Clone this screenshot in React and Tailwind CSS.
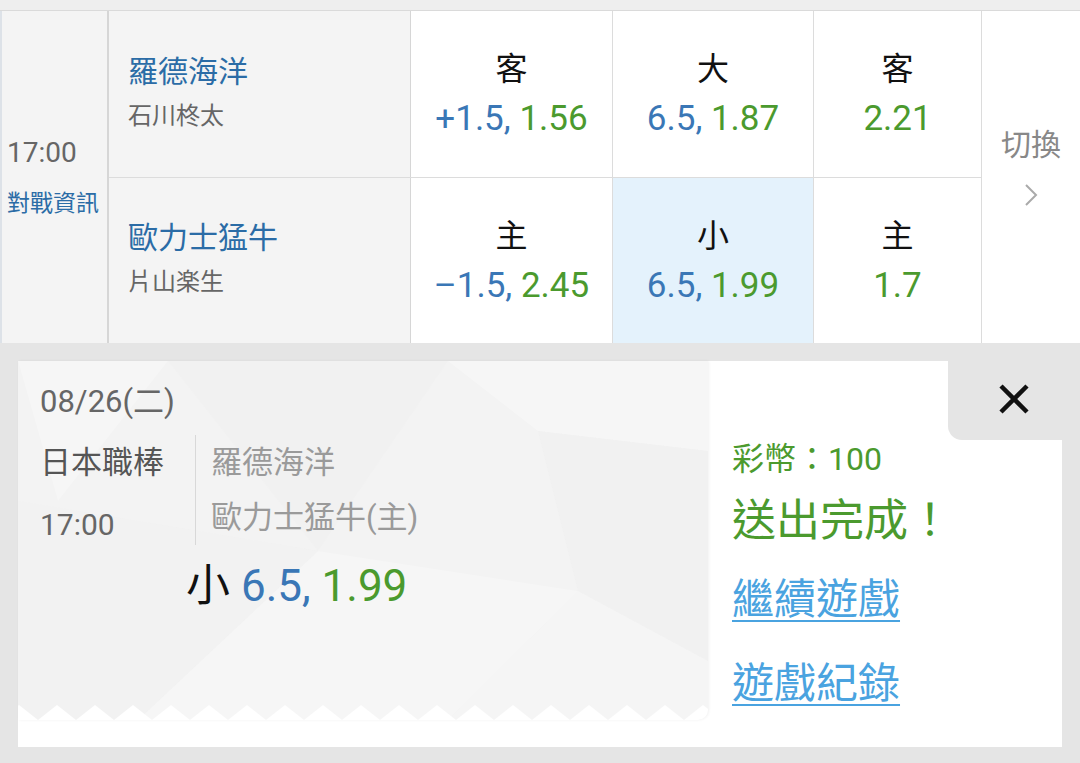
const BLUE = 'text-[#3a77b6]';
const GREEN = 'text-[#4b9a2e]';

function OddsCell({ label, line, price, highlight }) {
  return (
    <div
      className={`flex flex-col items-center justify-center border-r border-[#dcdcdc] ${
        highlight ? 'bg-[#e4f2fc]' : 'bg-white'
      }`}
    >
      <div className="text-[32px] leading-[48px] text-[#111]">{label}</div>
      <div className="mt-[2px] text-[35px] leading-[48px]">
        {line && <span className={BLUE}>{line}, </span>}
        <span className={GREEN}>{price}</span>
      </div>
    </div>
  );
}

function TeamCell({ name, pitcher, bottom }) {
  return (
    <div className={`bg-[#f4f4f4] border-r border-[#d6d6d6] pl-[19px] ${bottom ? 'pt-[40px]' : 'pt-[41px]'}`}>
      <div className="text-[30px] leading-[40px] text-[#2b6ca6]">{name}</div>
      <div className="mt-[6px] text-[24px] leading-[36px] text-[#666]">{pitcher}</div>
    </div>
  );
}

function TicketPattern() {
  return (
    <svg className="absolute inset-0 h-full w-full" viewBox="0 0 690 359" preserveAspectRatio="none">
      <polygon points="0,0 150,0 40,140" fill="#ffffff" opacity="0.25" />
      <polygon points="150,0 430,0 300,190" fill="#eeeeee" opacity="0.3" />
      <polygon points="430,0 690,0 690,90 520,70" fill="#ffffff" opacity="0.3" />
      <polygon points="0,140 300,190 120,359 0,359" fill="#eeeeee" opacity="0.25" />
      <polygon points="300,190 560,230 430,359 120,359" fill="#ffffff" opacity="0.25" />
      <polygon points="520,70 690,90 690,300 560,230" fill="#eeeeee" opacity="0.35" />
      <polygon points="560,230 690,300 690,359 430,359" fill="#ffffff" opacity="0.2" />
    </svg>
  );
}

function Zigzag() {
  return (
    <svg className="absolute bottom-0 left-0 h-[15px] w-full" preserveAspectRatio="none">
      <defs>
        <pattern id="zz" width="38" height="15" patternUnits="userSpaceOnUse" x="-18">
          <polygon points="0,15 19,0 38,15" fill="#ffffff" />
        </pattern>
      </defs>
      <rect width="100%" height="15" fill="url(#zz)" />
    </svg>
  );
}

export default function App() {
  return (
    <div className="w-[1080px] h-[763px] overflow-hidden bg-[#e5e5e5] font-['Roboto','Noto_Sans_CJK_TC',sans-serif]">
      {/* top strip */}
      <div className="h-[11px] bg-[#eeeeee] border-b border-[#dadada]" />

      {/* odds table */}
      <div className="grid h-[332px] grid-cols-[109px_302px_202px_201px_168px_1fr] grid-rows-[166px_166px] border-b border-[#dadada]">
        <div className="row-span-2 flex flex-col justify-center border-l-2 border-r-2 border-[#dde2e8] border-r-[#d6d6d6] bg-[#f4f4f4] pl-[5px]">
          <div className="text-[28px] leading-[40px] text-[#666]">17:00</div>
          <div className="mt-[13px] text-[23px] leading-[36px] text-[#2b6ca6]">對戰資訊</div>
        </div>

        <TeamCell name="羅德海洋" pitcher="石川柊太" />
        <OddsCell label="客" line="+1.5" price="1.56" />
        <OddsCell label="大" line="6.5" price="1.87" />
        <OddsCell label="客" price="2.21" />

        <div className="row-span-2 flex flex-col items-center bg-white pt-[114px]">
          <div className="text-[30px] leading-[40px] text-[#888]">切換</div>
          <svg className="mt-[18px]" width="14" height="24" viewBox="0 0 14 24">
            <polyline points="2,2 12,12 2,22" fill="none" stroke="#aaaaaa" strokeWidth="2" />
          </svg>
        </div>

        <div className="col-start-2 row-start-2 border-t border-[#dcdcdc] grid">
          <TeamCell name="歐力士猛牛" pitcher="片山楽生" bottom />
        </div>
        <div className="col-start-3 row-start-2 border-t border-[#dcdcdc] grid">
          <OddsCell label="主" line="–1.5" price="2.45" />
        </div>
        <div className="col-start-4 row-start-2 border-t border-[#dcdcdc] grid">
          <OddsCell label="小" line="6.5" price="1.99" highlight />
        </div>
        <div className="col-start-5 row-start-2 border-t border-[#dcdcdc] grid">
          <OddsCell label="主" price="1.7" />
        </div>
      </div>

      {/* confirmation card */}
      <div className="px-[18px] pt-[18px]">
        <div className="relative flex h-[386px] bg-white">
          <div className="h-[386px] w-[690px] pb-[27px]">
            <div className="relative h-full overflow-hidden rounded-br-[10px] bg-[#f3f3f3] pl-[22px] pt-[21px] shadow-[1px_0_3px_rgba(0,0,0,0.06)]">
              <TicketPattern />
              <div className="relative">
                <div className="text-[31px] leading-[40px] text-[#666]">08/26(二)</div>
                <div className="mt-[13px] flex">
                  <div className="w-[155px] pt-[6px]">
                    <div className="text-[31px] leading-[44px] text-[#555]">日本職棒</div>
                    <div className="mt-[18px] text-[30px] leading-[44px] text-[#666]">17:00</div>
                  </div>
                  <div className="h-[110px] border-l border-[#d8d8d8] pl-[15px] pt-[6px]">
                    <div className="text-[31px] leading-[44px] text-[#9a9a9a]">羅德海洋</div>
                    <div className="mt-[11px] text-[31px] leading-[44px] text-[#9a9a9a]">歐力士猛牛(主)</div>
                  </div>
                </div>
                <div className="mt-[15px] pl-[146px] text-[44px] leading-[48px]">
                  <span className="text-[#111]">小 </span>
                  <span className={BLUE}>6.5, </span>
                  <span className={GREEN}>1.99</span>
                </div>
              </div>
              <Zigzag />
            </div>
          </div>

          <div className="flex-1 pl-[24px] pt-[78px]">
            <div className={`text-[32px] leading-[40px] ${GREEN}`}>彩幣：100</div>
            <div className={`mt-[14px] text-[44px] leading-[56px] ${GREEN}`}>送出完成！</div>
            <div className="mt-[23px] text-[42px] leading-[56px] text-[#4aa3e0] underline decoration-2 underline-offset-[6px]">
              繼續遊戲
            </div>
            <div className="mt-[28px] text-[42px] leading-[56px] text-[#4aa3e0] underline decoration-2 underline-offset-[6px]">
              遊戲紀錄
            </div>
          </div>

          {/* close tab cut into the card corner */}
          <div className="absolute right-[-18px] top-[-18px] flex h-[97px] w-[132px] items-center justify-center rounded-bl-[14px] bg-[#e5e5e5] pt-[14px]">
            <svg width="30" height="30" viewBox="0 0 30 30">
              <path d="M2 2 L28 28 M28 2 L2 28" stroke="#111" strokeWidth="4.5" strokeLinecap="butt" />
            </svg>
          </div>
        </div>
      </div>
    </div>
  );
}
